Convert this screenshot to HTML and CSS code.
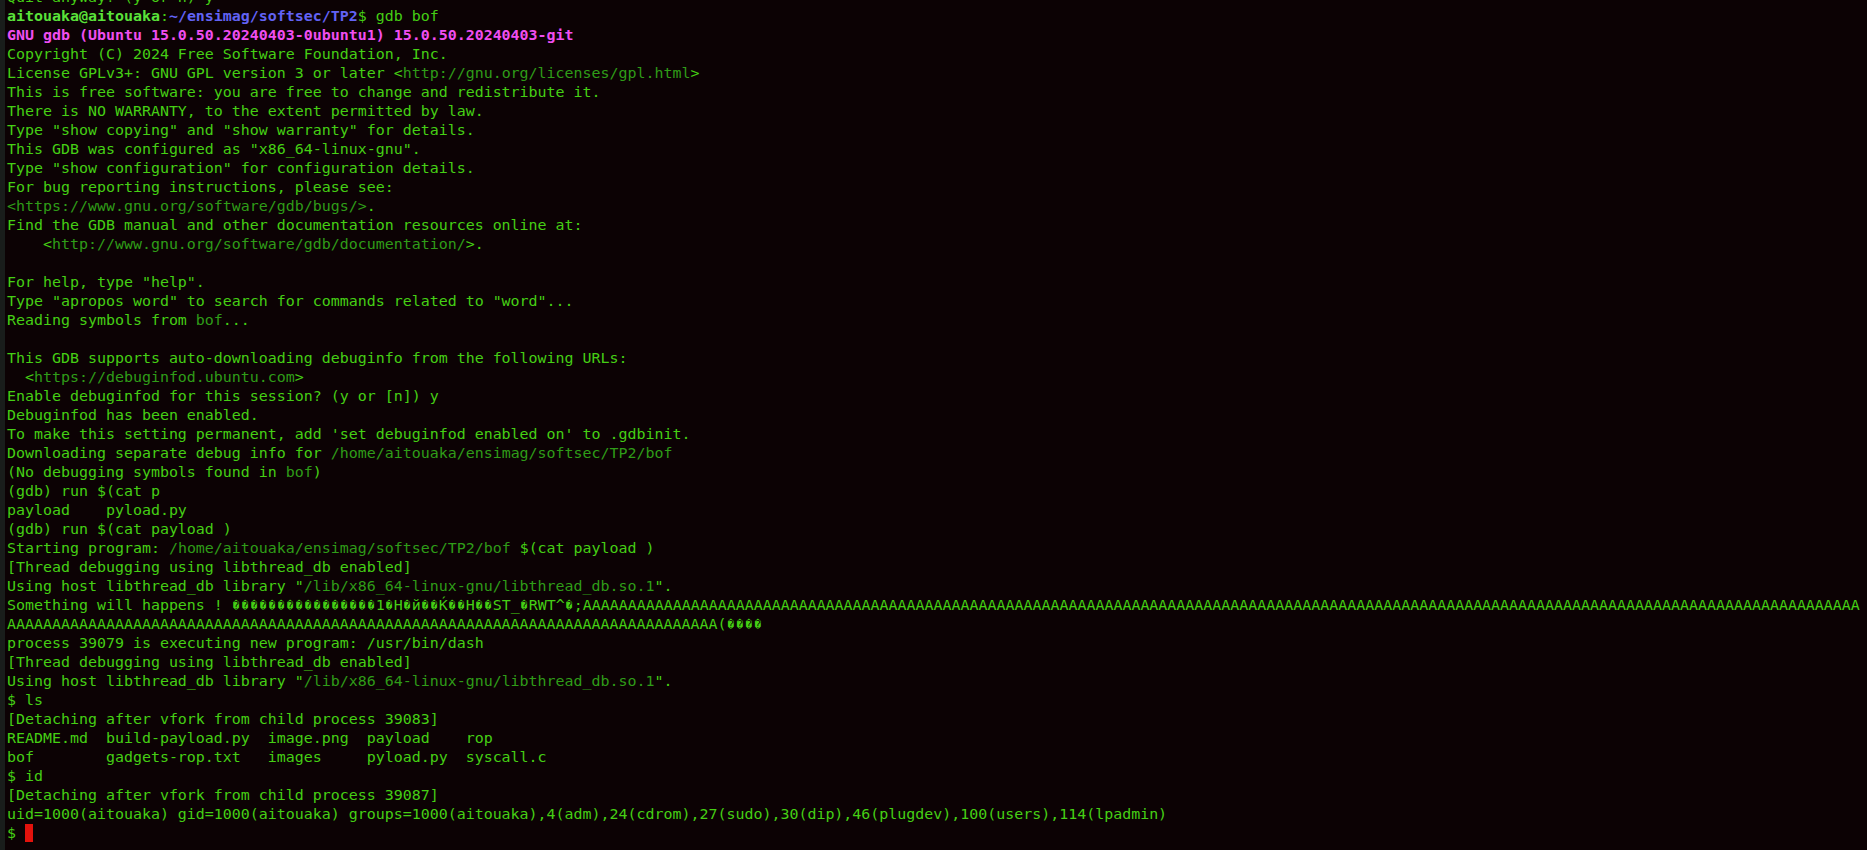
FILE: index.html
```html
<!DOCTYPE html>
<html lang="en">
<head>
<meta charset="utf-8">
<title>Terminal</title>
<link rel="stylesheet" href="styles.css">
</head>
<body>
<div class="window">
  <div class="edge"></div>
  <div class="term">
    <div class="ln">Quit anyway? (y or n) y</div>
    <div class="ln"><span class="usr">aitouaka@aitouaka</span>:<span class="path">~/ensimag/softsec/TP2</span>$ gdb bof</div>
    <div class="ln"><span class="mag">GNU gdb (Ubuntu 15.0.50.20240403-0ubuntu1) 15.0.50.20240403-git</span></div>
    <div class="ln">Copyright (C) 2024 Free Software Foundation, Inc.</div>
    <div class="ln">License GPLv3+: GNU GPL version 3 or later &lt;<span class="dim">http://gnu.org/licenses/gpl.html</span>&gt;</div>
    <div class="ln">This is free software: you are free to change and redistribute it.</div>
    <div class="ln">There is NO WARRANTY, to the extent permitted by law.</div>
    <div class="ln">Type "show copying" and "show warranty" for details.</div>
    <div class="ln">This GDB was configured as "x86_64-linux-gnu".</div>
    <div class="ln">Type "show configuration" for configuration details.</div>
    <div class="ln">For bug reporting instructions, please see:</div>
    <div class="ln"><span class="dim">&lt;https://www.gnu.org/software/gdb/bugs/&gt;</span>.</div>
    <div class="ln">Find the GDB manual and other documentation resources online at:</div>
    <div class="ln">    &lt;<span class="dim">http://www.gnu.org/software/gdb/documentation/</span>&gt;.</div>
    <div class="ln"> </div>
    <div class="ln">For help, type "help".</div>
    <div class="ln">Type "apropos word" to search for commands related to "word"...</div>
    <div class="ln">Reading symbols from <span class="dim">bof</span>...</div>
    <div class="ln"> </div>
    <div class="ln">This GDB supports auto-downloading debuginfo from the following URLs:</div>
    <div class="ln">  &lt;<span class="dim">https://debuginfod.ubuntu.com</span>&gt;</div>
    <div class="ln">Enable debuginfod for this session? (y or [n]) y</div>
    <div class="ln">Debuginfod has been enabled.</div>
    <div class="ln">To make this setting permanent, add 'set debuginfod enabled on' to .gdbinit.</div>
    <div class="ln">Downloading separate debug info for <span class="dim">/home/aitouaka/ensimag/softsec/TP2/bof</span></div>
    <div class="ln">(No debugging symbols found in <span class="dim">bof</span>)</div>
    <div class="ln">(gdb) run $(cat p</div>
    <div class="ln">payload    pyload.py</div>
    <div class="ln">(gdb) run $(cat payload )</div>
    <div class="ln">Starting program: <span class="dim">/home/aitouaka/ensimag/softsec/TP2/bof</span> $(cat payload )</div>
    <div class="ln">[Thread debugging using libthread_db enabled]</div>
    <div class="ln">Using host libthread_db library "<span class="dim">/lib/x86_64-linux-gnu/libthread_db.so.1</span>".</div>
    <div class="ln">Something will happens ! <span class="r">�</span><span class="r">�</span><span class="r">�</span><span class="r">�</span><span class="r">�</span><span class="r">�</span><span class="r">�</span><span class="r">�</span><span class="r">�</span><span class="r">�</span><span class="r">�</span><span class="r">�</span><span class="r">�</span><span class="r">�</span><span class="r">�</span><span class="r">�</span>1<span class="r">�</span>H<span class="r">�</span>й<span class="r">�</span><span class="r">�</span>Ќ<span class="r">�</span><span class="r">�</span>H<span class="r">�</span><span class="r">�</span>ST_<span class="r">�</span>RWT^<span class="r">�</span>;AAAAAAAAAAAAAAAAAAAAAAAAAAAAAAAAAAAAAAAAAAAAAAAAAAAAAAAAAAAAAAAAAAAAAAAAAAAAAAAAAAAAAAAAAAAAAAAAAAAAAAAAAAAAAAAAAAAAAAAAAAAAAAAAAAAAAAAAAAAAAA</div>
    <div class="ln">AAAAAAAAAAAAAAAAAAAAAAAAAAAAAAAAAAAAAAAAAAAAAAAAAAAAAAAAAAAAAAAAAAAAAAAAAAAAAAA(<span class="r">�</span><span class="r">�</span><span class="r">�</span><span class="r">�</span></div>
    <div class="ln">process 39079 is executing new program: /usr/bin/dash</div>
    <div class="ln">[Thread debugging using libthread_db enabled]</div>
    <div class="ln">Using host libthread_db library "<span class="dim">/lib/x86_64-linux-gnu/libthread_db.so.1</span>".</div>
    <div class="ln">$ ls</div>
    <div class="ln">[Detaching after vfork from child process 39083]</div>
    <div class="ln">README.md  build-payload.py  image.png  payload    rop</div>
    <div class="ln">bof        gadgets-rop.txt   images     pyload.py  syscall.c</div>
    <div class="ln">$ id</div>
    <div class="ln">[Detaching after vfork from child process 39087]</div>
    <div class="ln">uid=1000(aitouaka) gid=1000(aitouaka) groups=1000(aitouaka),4(adm),24(cdrom),27(sudo),30(dip),46(plugdev),100(users),114(lpadmin)</div>
    <div class="ln">$ <span class="cursor"></span></div>
  </div>
</div>
</body>
</html>
```
FILE: styles.css
```css
html, body {
  margin: 0;
  padding: 0;
  background: #0c0204;
}

.window {
  display: flex;
  height: 850px;
  overflow: hidden;
  background: #0c0204;
}

.edge {
  flex: 0 0 5px;
  background: #191d1b;
}

.term {
  flex: 1;
  display: flex;
  flex-direction: column;
  justify-content: flex-end;
  padding: 0 0 7px 2px;
  font-family: "DejaVu Sans Mono", "Liberation Mono", monospace;
  font-size: 14.95px;
  line-height: 19px;
  color: #45cf14;
  overflow: hidden;
}

.ln {
  flex: 0 0 19px;
  height: 19px;
  white-space: pre;
}

.usr {
  font-weight: bold;
  color: #5ae23a;
}

.path {
  font-weight: bold;
  color: #6262f4;
}

.mag {
  font-weight: bold;
  color: #f04ef0;
}

.dim {
  color: #2f9c18;
}

.r {
  display: inline-block;
  width: 9px;
  overflow: hidden;
  text-align: center;
  vertical-align: top;
  font-size: 11px;
  line-height: 20px;
  color: #45cf14;
}

.cursor {
  display: inline-block;
  width: 8px;
  height: 18px;
  vertical-align: -4px;
  background: #e3120c;
}
```
